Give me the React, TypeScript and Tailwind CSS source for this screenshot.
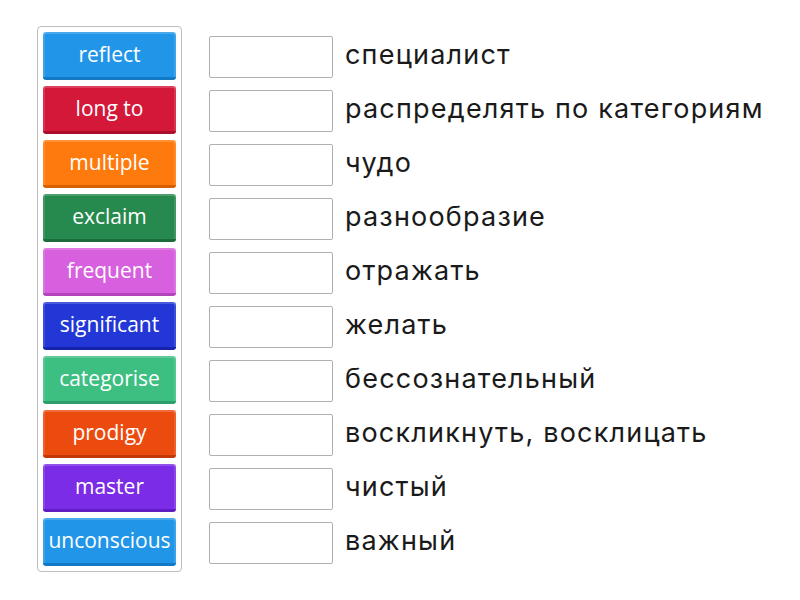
const tiles = [
  { label: "reflect", bg: "bg-[#2196e8]", edge: "border-b-[#1479c4]" },
  { label: "long to", bg: "bg-[#d4183a]", edge: "border-b-[#ab0e2a]" },
  { label: "multiple", bg: "bg-[#ff7a0c]", edge: "border-b-[#d85f00]" },
  { label: "exclaim", bg: "bg-[#26894d]", edge: "border-b-[#1b6b3b]" },
  { label: "frequent", bg: "bg-[#d760de]", edge: "border-b-[#b444bb]" },
  { label: "significant", bg: "bg-[#2237d6]", edge: "border-b-[#1624ac]" },
  { label: "categorise", bg: "bg-[#3dbf82]", edge: "border-b-[#2c9e69]" },
  { label: "prodigy", bg: "bg-[#ec4b10]", edge: "border-b-[#c23808]" },
  { label: "master", bg: "bg-[#7b2ce6]", edge: "border-b-[#5f1cc0]" },
  { label: "unconscious", bg: "bg-[#2196e8]", edge: "border-b-[#1479c4]" },
];

const answers = [
  "специалист",
  "распределять по категориям",
  "чудо",
  "разнообразие",
  "отражать",
  "желать",
  "бессознательный",
  "воскликнуть, восклицать",
  "чистый",
  "важный",
];

export default function App() {
  return (
    <div className="w-[800px] h-[600px] bg-white flex items-start pt-[26px] pl-[37px]">
      {/* tile stack */}
      <div className="flex flex-col gap-[6px] p-[5px] border border-[#bdbdbd] rounded-[4px]">
        {tiles.map((t) => (
          <div
            key={t.label}
            className={`w-[133px] h-[48px] rounded-[3px] border-b-[3px] ${t.bg} ${t.edge} flex items-center justify-center text-white text-[21px] font-medium font-['Open_Sans',sans-serif] shadow-[inset_0_2px_0_rgba(255,255,255,0.18),inset_2px_0_0_rgba(255,255,255,0.12),inset_-2px_0_0_rgba(255,255,255,0.12)]`}
          >
            {t.label}
          </div>
        ))}
      </div>
      {/* drop targets */}
      <div className="flex flex-col gap-[12px] ml-[27px] pt-[10px]">
        {answers.map((a) => (
          <div key={a} className="flex items-center h-[42px]">
            <div className="w-[124px] h-[42px] border border-[#b0b0b0] rounded-[2px] bg-white shrink-0" />
            <span className="ml-[12px] mb-[4px] text-[27px] tracking-[1.2px] text-[#1a1a1a] font-['Inter',sans-serif] whitespace-nowrap">
              {a}
            </span>
          </div>
        ))}
      </div>
    </div>
  );
}
